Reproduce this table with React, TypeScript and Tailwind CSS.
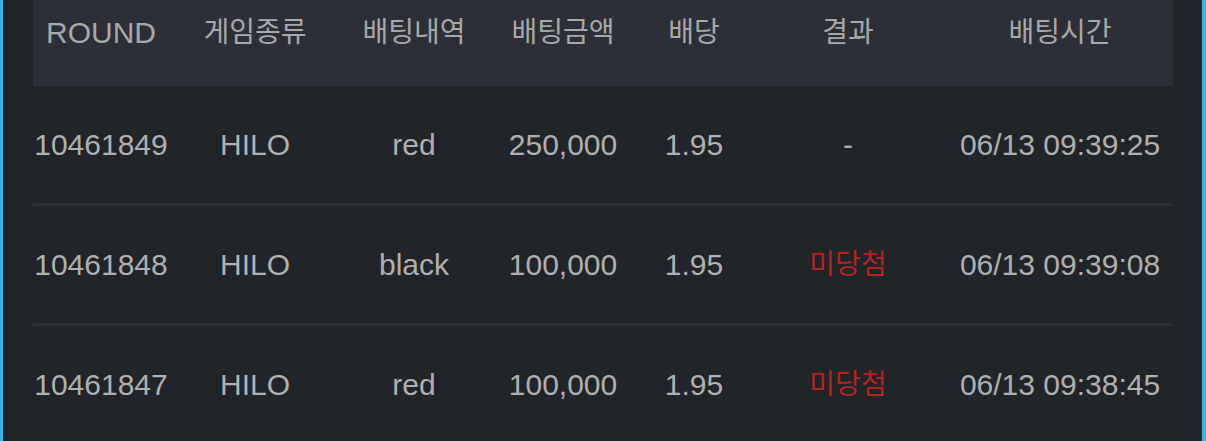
const rows = [
    { round: '10461849', game: 'HILO', pick: 'red', amount: '250,000', odds: '1.95', result: '-', time: '06/13 09:39:25' },
    { round: '10461848', game: 'HILO', pick: 'black', amount: '100,000', odds: '1.95', result: '미당첨', time: '06/13 09:39:08' },
    { round: '10461847', game: 'HILO', pick: 'red', amount: '100,000', odds: '1.95', result: '미당첨', time: '06/13 09:38:45' },
];

const cols = 'grid grid-cols-[136px_172px_146px_152px_110px_198px_226px]';

export default function App() {
    return (
        <div
            className="h-[441px] overflow-hidden bg-[#212529] border-l-[3px] border-r-[4px] border-[#3cb4e0] pl-[30px] pr-[29px] text-[30px] text-[#b0b0b0]"
            style={{ fontFamily: '"Liberation Sans", "Noto Sans CJK KR", sans-serif' }}
        >
            {/* Header */}
            <div className={`${cols} h-[86px] bg-[#2c2f37] pt-[16px] leading-[34px] text-center text-[#a8a8a8]`}>
                <div>ROUND</div>
                <div className="text-[28px]">게임종류</div>
                <div className="text-[28px]">배팅내역</div>
                <div className="text-[28px]">배팅금액</div>
                <div className="text-[28px]">배당</div>
                <div className="text-[28px]">결과</div>
                <div className="text-[28px]">배팅시간</div>
            </div>

            {rows.map((r) => (
                <div key={r.round} className={`${cols} h-[120px] items-center text-center border-b-[3px] border-[#2c2f36]`}>
                    <div>{r.round}</div>
                    <div>{r.game}</div>
                    <div>{r.pick}</div>
                    <div>{r.amount}</div>
                    <div>{r.odds}</div>
                    <div className={r.result === '-' ? '' : 'text-[28px] text-[#b5241d]'}>{r.result}</div>
                    <div>{r.time}</div>
                </div>
            ))}
        </div>
    );
}
